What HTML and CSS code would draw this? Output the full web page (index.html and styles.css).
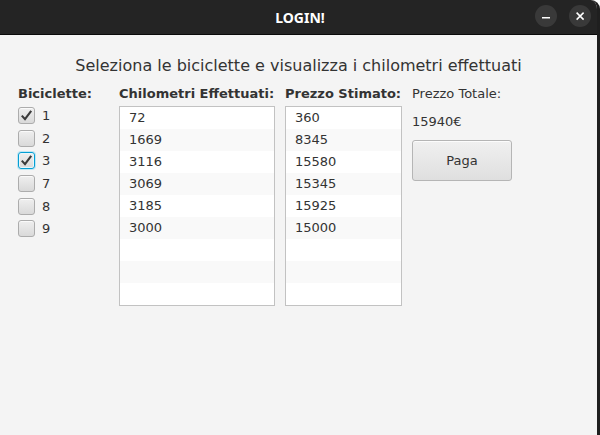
FILE: index.html
```html
<!DOCTYPE html>
<html lang="it">
<head>
<meta charset="utf-8">
<title>LOGIN!</title>
<link rel="stylesheet" href="styles.css">
</head>
<body>
<div class="window">
  <header class="titlebar">
    <span class="spacer"></span>
    <span class="wintitle">LOGIN!</span>
    <div class="controls">
      <span class="ctl">
        <svg width="22" height="22" viewBox="0 0 22 22"><path d="M7 12.8H15" stroke="#ffffff" stroke-width="1.5"/></svg>
      </span>
      <span class="ctl">
        <svg width="22" height="22" viewBox="0 0 22 22"><path d="M7.6 7.6L14.6 14.6M14.6 7.6L7.6 14.6" stroke="#ffffff" stroke-width="1.5"/></svg>
      </span>
    </div>
  </header>
  <main class="content">
    <h1 class="heading">Seleziona le biciclette e visualizza i chilometri effettuati</h1>
    <div class="columns">
      <section class="col col-bikes">
        <div class="colhead">Biciclette:</div>
        <ul class="checks">
          <li class="check"><span class="box checked"><svg width="17" height="17" viewBox="0 0 17 17"><path d="M3.8 8.6L7 12.2L13.2 3.8" fill="none" stroke="#3b3b3b" stroke-width="2.1" stroke-linejoin="miter"/></svg></span><span class="lbl">1</span></li>
          <li class="check"><span class="box"></span><span class="lbl">2</span></li>
          <li class="check"><span class="box checked focused"><svg width="17" height="17" viewBox="0 0 17 17"><path d="M3.8 8.6L7 12.2L13.2 3.8" fill="none" stroke="#3b3b3b" stroke-width="2.1" stroke-linejoin="miter"/></svg></span><span class="lbl">3</span></li>
          <li class="check"><span class="box"></span><span class="lbl">7</span></li>
          <li class="check"><span class="box"></span><span class="lbl">8</span></li>
          <li class="check"><span class="box"></span><span class="lbl">9</span></li>
        </ul>
      </section>
      <section class="col col-km">
        <div class="colhead">Chilometri Effettuati:</div>
        <ul class="list">
          <li>72</li><li>1669</li><li>3116</li><li>3069</li><li>3185</li><li>3000</li><li></li><li></li><li></li>
        </ul>
      </section>
      <section class="col col-price">
        <div class="colhead">Prezzo Stimato:</div>
        <ul class="list">
          <li>360</li><li>8345</li><li>15580</li><li>15345</li><li>15925</li><li>15000</li><li></li><li></li><li></li>
        </ul>
      </section>
      <section class="col col-total">
        <div class="colhead plain">Prezzo Totale:</div>
        <div class="total">15940€</div>
        <button class="btn" type="button">Paga</button>
      </section>
    </div>
  </main>
</div>
</body>
</html>
```

FILE: styles.css
```css
* { box-sizing: border-box; }

html, body {
  margin: 0;
  padding: 0;
  background: #ffffff;
}

body {
  width: 600px;
  height: 435px;
  overflow: hidden;
  font-family: "DejaVu Sans", sans-serif;
  color: #333333;
}

.window {
  width: 600px;
  height: 435px;
  display: flex;
  flex-direction: column;
  background: #f4f4f4;
  border-top-right-radius: 9px;
  border-right: 3px solid #1f1f1f;
  overflow: hidden;
}

.titlebar {
  height: 35px;
  flex: none;
  display: grid;
  grid-template-columns: 1fr auto 1fr;
  align-items: center;
  background: #242424;
  border-bottom: 1px solid #0a0a0a;
  margin-right: -3px;
}

.wintitle {
  font-family: "Noto Sans", "DejaVu Sans", sans-serif;
  font-weight: 700;
  font-size: 14px;
  color: #ffffff;
}

.controls {
  justify-self: end;
  display: flex;
  gap: 12px;
  padding-right: 9px;
  padding-bottom: 2px;
}

.ctl {
  width: 22px;
  height: 22px;
  border-radius: 50%;
  background: #393939;
  display: flex;
}

.content {
  flex: 1;
  display: flex;
  flex-direction: column;
}

.heading {
  margin: 21px 0 0 0;
  font-size: 16px;
  line-height: 20px;
  font-weight: 400;
  text-align: center;
  color: #333333;
}

.columns {
  display: flex;
  padding-left: 18px;
  margin-top: 10px;
}

.col {
  display: flex;
  flex-direction: column;
}

.colhead {
  font-size: 13px;
  line-height: 16px;
  font-weight: 700;
  white-space: nowrap;
}

.colhead.plain { font-weight: 400; }

.col-bikes { width: 101px; }
.col-km { width: 156px; margin-right: 10px; }
.col-price { width: 117px; margin-right: 10px; }
.col-total { width: 100px; }

.checks {
  list-style: none;
  margin: 5px 0 0 0;
  padding: 0;
  display: flex;
  flex-direction: column;
  gap: 5.7px;
}

.check {
  display: flex;
  align-items: center;
  gap: 7px;
  height: 17px;
}

.box {
  width: 17px;
  height: 17px;
  border: 1px solid #acacac;
  border-radius: 3px;
  background: linear-gradient(#efefef, #d9d9d9);
  box-shadow: inset 0 1px 0 rgba(255,255,255,0.7);
  display: flex;
}

.box svg { margin: -1px; }

.box.focused {
  border-color: #039ed3;
  box-shadow: 0 0 0 1px #bfe6f4, inset 0 0 0 1px #e9f6fb;
}

.lbl {
  font-size: 13px;
  line-height: 16px;
  padding-top: 1px;
}

.list {
  list-style: none;
  margin: 4px 0 0 0;
  padding: 0;
  height: 200px;
  border: 1px solid #c2c2c2;
  background: #ffffff;
}

.list li {
  height: 22px;
  line-height: 22px;
  font-size: 13px;
  padding-left: 9px;
  background: #ffffff;
}

.list li:nth-child(even) { background: #f9f9f9; }

.total {
  font-size: 13px;
  line-height: 16px;
  margin-top: 12px;
}

.btn {
  margin-top: 10px;
  width: 100px;
  height: 41px;
  border: 1px solid #b5b5b5;
  border-radius: 3px;
  background: linear-gradient(#f0f0f0, #dfdfdf);
  box-shadow: inset 0 1px 0 rgba(255,255,255,0.8);
  font-family: "DejaVu Sans", sans-serif;
  font-size: 13px;
  color: #333333;
  padding: 0;
}
```
